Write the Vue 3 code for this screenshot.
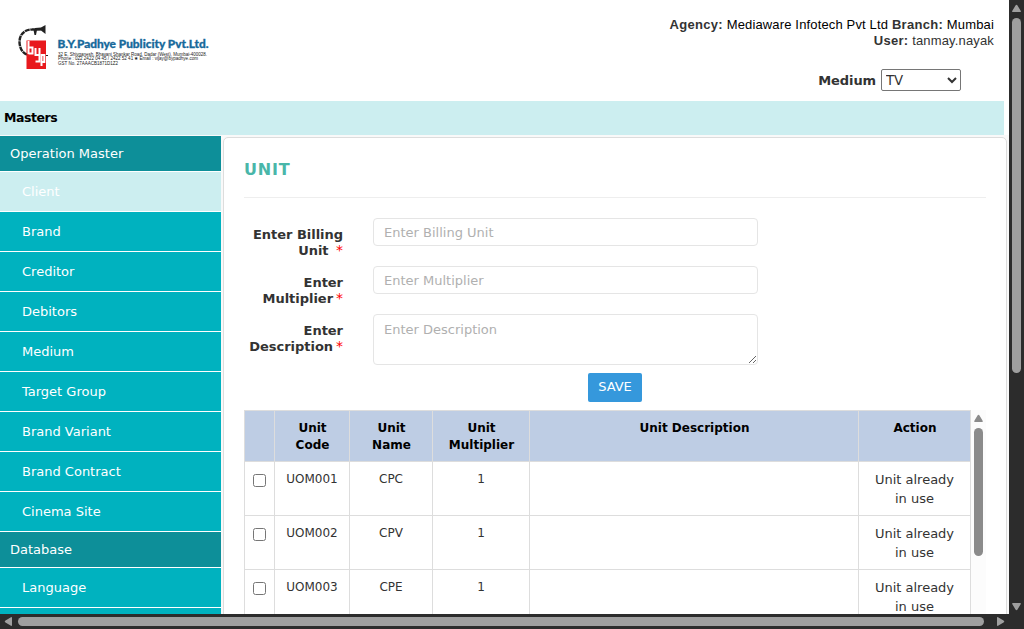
<script setup>
const menu = [
  { t: 'Operation Master', head: true },
  { t: 'Client', active: true },
  { t: 'Brand' }, { t: 'Creditor' }, { t: 'Debitors' }, { t: 'Medium' },
  { t: 'Target Group' }, { t: 'Brand Variant' }, { t: 'Brand Contract' }, { t: 'Cinema Site' },
  { t: 'Database', head: true },
  { t: 'Language' }, { t: '' },
]
const rows = [['UOM001', 'CPC'], ['UOM002', 'CPV'], ['UOM003', 'CPE']]
</script>

<template>
  <div class="window">
    <div class="page">
      <header class="top">
        <svg class="logo" width="230" height="80" viewBox="0 0 230 80">
          <path d="M27 44.500 C22 43 19.500 37 19.500 32 C19.500 24 25 19.500 32 19.500 L43 19" fill="none" stroke="#222" stroke-width="2.400" stroke-dasharray="5 .6" />
          <path d="M35 18 L41 17.500 L45.500 15 V24 L41 20.500 L35 20.500Z M33.500 20h3.500l-1 5h-1.500z" fill="#222" />
          <rect x="26.500" y="30.500" width="19.500" height="28.500" fill="#e8191d" />
          <g fill="none" stroke="#fff" stroke-width="2">
            <path d="M28.500 31V44M28.500 37.500h4v6h-4" />
            <path d="M35.500 38v7h4M39.500 38v13.500h-4" />
            <path d="M41.500 56V45h2.800v7h-2.800" />
          </g>
          <path d="M46 45.500h2" stroke="#222" />
          <text x="57.500" y="38" class="brand" textLength="151" lengthAdjust="spacingAndGlyphs">B.Y.Padhye Publicity Pvt.Ltd.</text>
          <text x="58" y="45.500" class="fine" textLength="149" lengthAdjust="spacingAndGlyphs">32 E, Shivganesh, Bhavani Shankar Road, Dadar (West), Mumbai-400028.</text>
          <text x="58" y="50.300" class="fine" textLength="140" lengthAdjust="spacingAndGlyphs">Phone : 022 2422 04 45 / 2422 52 41 ★ Email : vijay@bypadhye.com</text>
          <text x="58" y="55.300" class="fine" textLength="60" lengthAdjust="spacingAndGlyphs">GST No. 27AAACB1871D1Z2</text>
        </svg>
        <div class="account">
          <div><b>Agency:</b> <span class="dark">Mediaware Infotech Pvt Ltd</span> <b>Branch:</b> <span class="dark">Mumbai</span></div>
          <div><b>User:</b> tanmay.nayak</div>
          <div class="medium"><label>Medium</label><select><option>TV</option></select></div>
        </div>
      </header>
      <div class="bar"><span>Masters</span></div>
      <div class="body">
        <nav>
          <div v-for="(m, i) in menu" :key="i" :class="{ head: m.head, active: m.active }"><span>{{ m.t }}</span></div>
        </nav>
        <main>
          <h1>UNIT</h1>
          <form @submit.prevent>
            <div class="field"><label>Enter Billing<br>Unit <em>*</em></label><input placeholder="Enter Billing Unit"></div>
            <div class="field"><label>Enter<br>Multiplier<em>*</em></label><input placeholder="Enter Multiplier"></div>
            <div class="field"><label>Enter<br>Description<em>*</em></label><textarea placeholder="Enter Description"></textarea></div>
            <button>SAVE</button>
          </form>
          <div class="listing">
            <table>
              <colgroup><col class="c1"><col class="c2"><col class="c3"><col class="c4"><col class="c5"><col class="c6"></colgroup>
              <thead><tr><th></th><th>Unit<br>Code</th><th>Unit<br>Name</th><th>Unit<br>Multiplier</th><th>Unit Description</th><th>Action</th></tr></thead>
              <tbody>
                <tr v-for="r in rows" :key="r[0]">
                  <td class="check"><input type="checkbox"></td><td>{{ r[0] }}</td><td>{{ r[1] }}</td><td>1</td><td></td><td class="action">Unit already<br>in use</td>
                </tr>
              </tbody>
            </table>
            <svg class="inner-scroll" width="15" height="204"><path d="M4 12 Q2.500 12 3.500 10.500 L6.500 5.500 Q7.500 4 8.500 5.500 L11.500 10.500 Q12.500 12 11 12Z" /><rect x="3" y="18" width="9" height="128" rx="4.500" /></svg>
          </div>
        </main>
      </div>
    </div>
    <svg class="vscroll" width="15" height="614"><path d="M4 12 Q2.500 12 3.500 10.500 L6.500 5.500 Q7.500 4 8.500 5.500 L11.500 10.500 Q12.500 12 11 12Z M4 603 Q2.500 603 3.500 604.500 L6.500 609.500 Q7.500 611 8.500 609.500 L11.500 604.500 Q12.500 603 11 603Z" /><rect x="3" y="18" width="9" height="355" rx="4.500" /></svg>
    <svg class="hscroll" width="1024" height="15"><path d="M12 4 Q12 2.500 10.500 3.500 L5.500 6.500 Q4 7.500 5.500 8.500 L10.500 11.500 Q12 12.500 12 11Z M997 4 Q997 2.500 998.500 3.500 L1003.500 6.500 Q1005 7.500 1003.500 8.500 L998.500 11.500 Q997 12.500 997 11Z" /><rect x="18" y="3" width="966" height="9" rx="4.500" /></svg>
  </div>
</template>

<style>
body { margin: 0; overflow: hidden; }
</style>
<style scoped>
* { box-sizing: border-box; }
.window { width: 1024px; height: 629px; display: grid; grid-template: 614px 15px / 1009px 15px; font: 13px "DejaVu Sans", sans-serif; color: #333; overflow: hidden; }
.page { background: #fff; overflow: hidden; height: 614px; }
.vscroll, .hscroll { display: block; background: #2c2c2c; fill: #9f9f9f; }
.hscroll { grid-column: 1 / 3; }
.top { height: 101px; display: flex; justify-content: space-between; }
.logo { margin-top: 10px; flex: none; width: 230px; overflow: visible; }
.brand { font: 900 11px Lato, sans-serif; fill: #17699b; stroke: #17699b; stroke-width: .3px; }
.fine { font: 4.8px "Liberation Sans", sans-serif; fill: #222; }
.account { font: 13px/16px "Liberation Sans", sans-serif; letter-spacing: .15px; text-align: right; padding: 17px 15px 0 0; }
.account b { letter-spacing: .3px; }
.dark { color: #000; }
.medium { display: flex; justify-content: flex-end; align-items: center; gap: 5px; margin: 20px 33px 0 0; }
.medium label { font: bold 13px "DejaVu Sans", sans-serif; letter-spacing: -.1px; }
select { width: 80px; height: 22px; font: 13.3px "DejaVu Sans", sans-serif; letter-spacing: 0; color: #333; background: #fff; border: 1px solid #767676; border-radius: 2px; padding: 0; }
.bar { width: 1004px; height: 34px; background: #cceef0; padding: 9px 4px; line-height: 16px; font-weight: bold; font-size: 12.5px; letter-spacing: -.45px; color: #000; }
.body { display: flex; gap: 2px; height: 480px; padding-top: 1px; background: #f9f9f9; }
nav { width: 221px; flex: none; background: #fff; }
nav div { height: 40px; border-bottom: 1px solid #fff; background: #00b2bf; color: #fff; padding-left: 22px; line-height: 39px; }
nav .head { height: 36px; background: #0d8f99; padding-left: 10px; line-height: 35px; }
nav .active { background: #cceef0; }
main { width: 784px; flex: none; height: 500px; margin-top: 1px; background: #fff; border: 1px solid #ddd; border-radius: 5px; padding: 0 20px; }
h1 { margin: 0; height: 60px; padding-top: 22px; border-bottom: 1px solid #eee; font-size: 16px; line-height: 20px; letter-spacing: .8px; color: #49b6a9; }
form { height: 212px; padding-top: 20px; }
.field { display: flex; height: 48px; }
.field label { width: 99px; margin-right: 30px; padding-top: 9px; text-align: right; font-weight: bold; line-height: 16px; white-space: nowrap; letter-spacing: -.03px; }
em { color: red; font-style: normal; font-weight: normal; margin-left: 3px; font-size: 14px; line-height: 1; }
.field input, textarea { width: 385px; height: 28px; border: 1px solid #e5e5e5; border-radius: 4px; padding: 0 10px; font: 13px "DejaVu Sans", sans-serif; background: #fff; margin: 0; }
textarea { height: 51px; padding-top: 7px; }
input::placeholder, textarea::placeholder { color: #b0b0b0; opacity: 1; }
button { display: block; margin: 11px 0 0 344px; width: 54px; height: 29px; border: 0; border-radius: 2px; background: #3598dc; color: #fff; font: 13px "DejaVu Sans", sans-serif; padding: 0 0 2px; }
.listing { display: flex; align-items: flex-start; width: 742px; }
table { table-layout: fixed; width: 727px; border-collapse: collapse; }
th, td { border: 1px solid #ddd; padding: 8px 4px; text-align: center; vertical-align: top; }
th { height: 51px; background: #becde4; color: #000; font-size: 12px; line-height: 17px; padding: 9px 3px 7px 4px; }
td { height: 54px; font-size: 12px; line-height: 18px; }
.action { font-size: 13px; padding: 9px 4px 5px; line-height: 18.5px; }
.c1 { width: 30px; } .c2 { width: 75px; } .c3 { width: 83px; } .c4 { width: 97px; } .c5 { width: 329px; } .c6 { width: 112px; }
.check { padding: 12px 0 0; }
.check input { display: block; width: 13px; height: 13px; margin: 0 auto; }
.inner-scroll { flex: none; background: #fcfcfc; fill: #8b8b8b; }
</style>
